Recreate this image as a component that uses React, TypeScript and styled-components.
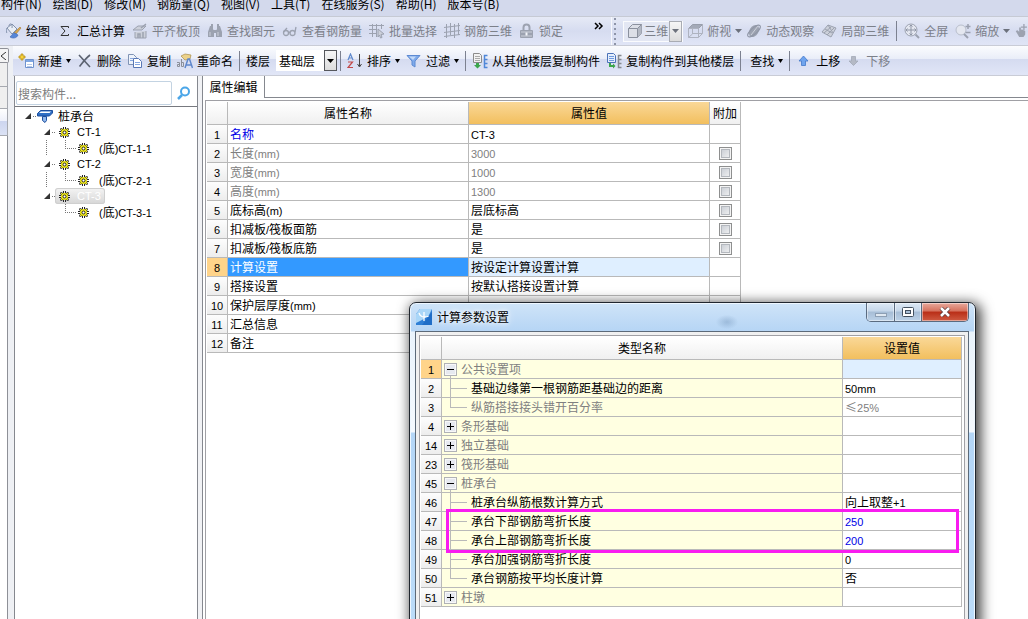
import React from "react";
import styled, { createGlobalStyle, css } from "styled-components";

const GlobalStyle = createGlobalStyle`
  * { box-sizing: border-box; }
  body {
    margin: 0;
    background: #fff;
    color: #000;
    font: 12px/16px "Noto Sans CJK SC", "Liberation Sans", sans-serif;
  }
  button, input, select { font: inherit; color: inherit; }
`;

const LINE = "#b9b9b9";
const FRAME = "#a0a0a5";

/* ---------- page shell ---------- */

const Page = styled.div`
  position: relative;
  display: flex;
  flex-direction: column;
  height: 100vh;
  overflow: hidden;
  background: #fff;
`;

const MenuBar = styled.nav`
  display: flex;
  flex: none;
  height: 17px;
  gap: 11px;
  padding-left: 1px;
  background: #d3d9ec;
  border-bottom: 1px solid #c6cad4;
`;

const MenuItem = styled.button`
  height: 16px;
  margin-top: -4px;
  padding: 0;
  border: 0;
  background: none;
  white-space: nowrap;
  line-height: 16px;
`;

const Toolbar = styled.div`
  display: flex;
  flex: none;
  align-items: center;
  height: 29px;
  padding-left: 6px;
  gap: 7px;
  overflow: hidden;
  border-bottom: 1px solid #c9ccd6;
  background: linear-gradient(#e6eaf6, #d6dcf0 50%, #e0e5f6);
`;

const ItemToolbar = styled(Toolbar)`
  height: 30px;
  padding-left: 5px;
  gap: 6px;
  background: linear-gradient(#fbfcfe, #e9edf8 45%, #d5dbf0 46%, #e1e6f7);
`;

const ToolButton = styled.button<{ $tight?: boolean; $bare?: boolean }>`
  display: flex;
  flex: none;
  align-items: center;
  gap: 4px;
  margin: 0 ${(p) => (p.$tight ? -3 : 0)}px 0 0;
  padding: 0 0 0 ${(p) => (p.$bare ? 3 : 0)}px;
  border: 0;
  background: none;
  white-space: nowrap;
  &:disabled { color: #7c8089; }
`;

const Divider = styled.span`
  flex: none;
  width: 1px;
  height: 20px;
  background: #7c8190;
`;

const Spacer = styled.span`
  flex: none;
  width: 16px;
`;

const Overflow = styled.button`
  flex: none;
  width: 11px;
  height: 24px;
  padding: 0;
  border: 0;
  background: none;
  line-height: 0;
`;

const Grip = styled.span`
  flex: none;
  width: 5px;
  height: 28px;
  border-left: 1px solid #f7f8fc;
  background: radial-gradient(circle at 3px 3px, #8d94a8 1px, transparent 1px) 0 4px / 5px 5px;
`;

const Combo = styled.label<{ $width: number; $dim?: boolean }>`
  display: flex;
  flex: none;
  align-items: center;
  width: ${(p) => p.$width}px;
  height: 21px;
  margin-right: -3px;
  padding-left: 3px;
  gap: 1px;
  background: ${(p) => (p.$dim ? "#e3e7f3" : "#fff")};
  border: ${(p) => (p.$dim ? "1px solid #fafbfd" : "0")};
  color: ${(p) => (p.$dim ? "#7c8089" : "#000")};
`;

const ComboSelect = styled.select`
  flex: 1;
  min-width: 0;
  padding: 0;
  border: 0;
  appearance: none;
  background: none;
  opacity: 1;
`;

const ComboArrow = styled.span<{ $dim?: boolean }>`
  display: flex;
  flex: none;
  align-items: center;
  justify-content: center;
  width: 13px;
  height: 21px;
  border: 1px solid ${(p) => (p.$dim ? "#a9acb3" : "#55575c")};
  background: linear-gradient(#f6f6f6, #dcdcdc);
`;

const Work = styled.div`
  display: flex;
  flex: 1;
  min-height: 0;
`;

const Dock = styled.aside`
  display: flex;
  flex: none;
  flex-direction: column;
  width: 13px;
  padding: 2px 5px 0 0;
  background: #eef0f4;
`;

const DockClose = styled.button`
  height: 15px;
  margin-right: -1px;
  padding: 0;
  border: 1px solid #8e9097;
  border-left: 0;
  border-radius: 0 2px 2px 0;
  background: #f4f4f4;
  line-height: 0;
`;

const DockCell = styled.div<{ $h: number; $tone?: "blue" }>`
  height: ${(p) => p.$h}px;
  border-right: 1px solid #a6a9b0;
  border-bottom: 1px solid #a6a9b0;
  background: ${(p) => (p.$tone ? "linear-gradient(#fff, #eef1fb 45%, #ccd5ef 46%, #dbe2f5)" : "#efefef")};
`;

const DockBody = styled.div`
  flex: 1;
  border-right: 1px solid #8e9097;
  background: #fff;
`;

const Main = styled.div`
  display: flex;
  flex: 1;
  flex-direction: column;
  min-width: 0;
`;

const Panels = styled.div`
  display: flex;
  flex: 1;
  gap: 4px;
  min-height: 0;
  background: #f1f2f5;
`;

/* ---------- component tree ---------- */

const TreePanel = styled.section`
  display: flex;
  flex: none;
  flex-direction: column;
  width: 184px;
  margin-left: 1px;
  border: 1px solid #85888f;
  border-width: 0 1px;
  background: #fff;
`;

const SearchRow = styled.form`
  display: flex;
  align-items: center;
  height: 31px;
  padding: 5px 1px 1px;
  border-bottom: 1px solid #77797f;
`;

const SearchInput = styled.input`
  flex: 1;
  min-width: 0;
  height: 24px;
  padding: 0 1px;
  border: 1px solid #c3d3e2;
  border-radius: 2px;
  &::placeholder { color: #7d7d7d; opacity: 1; }
`;

const SearchButton = styled.button`
  width: 24px;
  padding: 0;
  border: 0;
  background: none;
  line-height: 0;
`;

const TreeList = styled.ul`
  margin: 0;
  padding: 1px 0;
  list-style: none;
`;

const TreeRow = styled.li`
  display: flex;
  align-items: center;
  height: 16px;
  white-space: nowrap;
  svg { flex: none; display: block; }
`;

const TreeLabel = styled.span<{ $gap: number; $selected?: boolean; $inset?: number }>`
  display: flex;
  align-items: center;
  gap: ${(p) => p.$gap}px;
  height: 16px;
  padding: 0 4px 0 ${(p) => p.$inset ?? 0}px;
  border-radius: 3px;
  ${(p) =>
    p.$selected &&
    css`
      color: #fff;
      background: linear-gradient(#f4f4f4, #d6d6d6);
      box-shadow: inset 0 0 0 1px #cfcfcf;
    `}
`;

/* ---------- grids ---------- */

const Latin = styled.span`
  font: 11px/16px "Liberation Sans", sans-serif;
`;

const EditorPane = styled.section`
  display: flex;
  flex: 1;
  flex-direction: column;
  min-width: 0;
  border-left: 1px solid #85888f;
  background: #fff;
`;

const TabStrip = styled.div`
  display: flex;
  height: 22px;
  &::after {
    content: "";
    flex: 1;
    border-bottom: 1px solid #85888f;
  }
`;

const Tab = styled.button`
  width: 62px;
  padding: 0;
  border: 0;
  border-right: 1px solid #85888f;
  background: #fff;
  text-align: center;
`;

const GridFrame = styled.div`
  flex: 1;
  margin: 2px 0 0 2px;
  padding: 1px;
  border: 1px solid ${FRAME};
  border-width: 1px 0 0 1px;
`;

const Grid = styled.table`
  table-layout: fixed;
  border-collapse: separate;
  border-spacing: 0;
`;

const Head = styled.th<{ $hot?: boolean }>`
  height: 23px;
  padding: 0;
  border: 1px solid ${LINE};
  border-width: 0 1px 1px 0;
  background: ${(p) => (p.$hot ? "linear-gradient(#fad898, #f2bf5e)" : "linear-gradient(#fff, #f0f0f0)")};
  font-weight: 400;
  white-space: nowrap;
`;

const RowHead = styled.th<{ $hot?: boolean }>`
  height: 19px;
  padding: 0;
  border: 1px solid ${LINE};
  border-width: 0 1px 1px 0;
  background: ${(p) => (p.$hot ? "#ffd48a" : "linear-gradient(#fdfdfd, #ededed)")};
  font-weight: 400;
`;

type Tone = "dim" | "blue" | "picked" | undefined;

const Cell = styled.td<{ $tone?: Tone; $bg?: string; $flush?: boolean }>`
  height: 19px;
  padding: 0 0 0 ${(p) => (p.$flush ? 0 : 2)}px;
  border: 1px solid ${LINE};
  border-width: 0 1px 1px 0;
  line-height: 16px;
  white-space: nowrap;
  overflow: hidden;
  background: ${(p) => (p.$tone === "picked" ? "#3399ff" : p.$bg ?? "#fff")};
  color: ${(p) =>
    p.$tone === "dim" ? "#808080" : p.$tone === "blue" ? "#0000e6" : p.$tone === "picked" ? "#fff" : "#000"};
`;

const Check = styled.input`
  display: block;
  width: 13px;
  height: 13px;
  margin: 0 auto;
  appearance: none;
  border: 1px solid #8e8f8f;
  background: linear-gradient(135deg, #c3c8d0, #f6f6f6);
  box-shadow: inset 0 0 0 1px #f4f4f4, inset 0 0 0 2px #b4b8be;
`;

const Branch = styled.div`
  display: flex;
  align-items: center;
  height: 18px;
  svg { flex: none; display: block; }
`;

const Expander = styled.button`
  flex: none;
  width: 13px;
  height: 18px;
  margin: 0 4px 0 2px;
  padding: 0;
  border: 0;
  background: none;
`;

/* ---------- settings window ---------- */

const Window = styled.div`
  position: absolute;
  left: 409px;
  top: 302px;
  bottom: -12px;
  display: flex;
  flex-direction: column;
  width: 567px;
  padding: 0 6px 6px 5px;
  border: 1px solid #20262e;
  border-radius: 7px;
  background: linear-gradient(#cfe4f8 0, #b6d5f5 28px, #e9f3fc 29px, #f4f9fe 129px, #b4d6f7 130px, #bcdcf9);
  box-shadow: inset 0 0 0 1px #eef7ff, 3px 3px 13px 2px rgba(0, 0, 0, 0.75);
`;

const TitleBar = styled.header`
  display: flex;
  flex: none;
  align-items: flex-start;
  height: 28px;
  padding-left: 1px;
  gap: 5px;
  background: radial-gradient(ellipse 14px 9px at 312px 19px, rgba(95, 130, 170, 0.35), transparent 80%);
  svg { flex: none; display: block; }
`;

const Title = styled.h1`
  flex: 1;
  margin: 0;
  padding-top: 6px;
  font-size: 12px;
  font-weight: 400;
  line-height: 16px;
  text-shadow: 0 0 8px #fff, 0 0 4px #fff;
`;

const TitleIcon = styled.span`
  padding-top: 6px;
`;

const WindowButtons = styled.div`
  display: flex;
  height: 19px;
  border: 1px solid #5a6b80;
  border-top: 0;
  border-radius: 0 0 5px 5px;
  overflow: hidden;
`;

const WindowButton = styled.button<{ $kind: "min" | "max" | "close" }>`
  display: flex;
  align-items: center;
  justify-content: center;
  width: ${(p) => ({ min: 28, max: 27, close: 46 })[p.$kind]}px;
  padding: 0;
  border: 0;
  border-right: ${(p) => (p.$kind === "close" ? "0" : "1px solid #5a6b80")};
  background: ${(p) =>
    p.$kind === "close"
      ? "linear-gradient(#e8a99c, #d5705c 45%, #b92e17 50%, #cf5b42)"
      : "linear-gradient(#dde9f5, #c5d6e9 45%, #a6bdd6 50%, #bdd2e8)"};
  box-shadow: inset 0 0 0 1px rgba(255, 255, 255, 0.45);
`;

const Client = styled.div`
  flex: 1;
  min-height: 0;
  padding: 3px;
  border: 1px solid #5c6a79;
  background: #f0f0f0;
`;

const SettingsFrame = styled.div`
  height: 100%;
  padding: 1px;
  border: 1px solid ${FRAME};
  background: #fff;
`;

const Highlight = styled.div`
  position: absolute;
  left: 446px;
  top: 509px;
  width: 513px;
  height: 44px;
  border: 3px solid #f81cf0;
  pointer-events: none;
`;

/* ---------- drawings ---------- */

const Svg = ({ w = 16, h = 16, children }: { w?: number; h?: number; children: React.ReactNode }) => (
  <svg width={w} height={h} viewBox={`0 0 ${w} ${h}`} fill="none" aria-hidden="true">
    {children}
  </svg>
);

const Caret = ({ w = 7, dim = false }: { w?: number; dim?: boolean }) => (
  <Svg w={w} h={4}>
    <path d={`M0 0h${w}L${w / 2} 4z`} fill={dim ? "#6c717c" : "#000"} />
  </Svg>
);

const G = "#9ca2b0";
const GL = "#ccd0da";

const PaintIcon = () => (
  <Svg>
    <path d="M1 5l5-4 5 5-5 5z" fill="#e9eef6" stroke="#8291ab" />
    <path d="M3 3C3 0 7 0 6 5M1 5c-1 2-1 4 0 5" stroke="#8291ab" />
    <path d="M14 4l1 1-5 6-2-1z" fill="#d9a84e" stroke="#a37a35" strokeWidth=".6" />
    <path d="M9 10c-2 0-3 2-5 4 3 2 7 1 8-2z" fill="#5686d8" stroke="#3d66b0" strokeWidth=".6" />
  </Svg>
);
const SigmaIcon = () => (
  <Svg>
    <path d="M11.500 5V3.500H4L8 8l-4 4.500h7.500V11" stroke="#333" />
  </Svg>
);
const SlabIcon = () => (
  <Svg>
    <path d="M1 7l5-4h8l-4 4zM3 9v6h11V8" fill={GL} stroke={G} />
    <path d="M6 15v-4h2v4M11 15V9M9 5l5-4" stroke={G} strokeWidth="1.500" />
  </Svg>
);
const BinocularsIcon = () => (
  <Svg>
    <path d="M3 3h3v3l1 2v6H1V9zM10 3h3l2 6v5H9V8l1-2z" fill={G} />
    <path d="M6 7h4v3H6zM4 1h2v2H4zM10 1h2v2h-2z" fill={G} />
    <path d="M3 9v4M11 9v4" stroke={GL} />
  </Svg>
);
const GlassesIcon = () => (
  <Svg>
    <circle cx="4" cy="10" r="2.500" stroke={G} strokeWidth="1.300" />
    <circle cx="10.500" cy="10" r="2.500" stroke={G} strokeWidth="1.300" />
    <path d="M6.500 10c.5-1 1-1 1.500 0M1.500 9L5 5M13 9l1-5" stroke={G} strokeWidth="1.300" />
  </Svg>
);
const PickIcon = () => (
  <Svg>
    <path d="M0 2.500h15M0 6.500h8M0 10.500h8M3.500 1v13M7.500 1v13M12.500 1v5" stroke={G} />
    <path d="M9 6l6 5-3 .5 1 3-1.500.5-1-3L9 14z" fill={GL} stroke={G} />
  </Svg>
);
const RebarIcon = () => (
  <Svg>
    <path d="M2.500 1v14M6.500 0v12M10.500 1v14M14.500 0v12M0 4.500l16-2M0 9.500l16-2M0 13.500l16-2" stroke={G} />
  </Svg>
);
const LockIcon = () => (
  <Svg>
    <path d="M4.500 7V4.500a3 3 0 016 0V7" stroke={G} strokeWidth="2" />
    <rect x="1" y="7" width="13" height="8" rx="1" fill={G} />
    <path d="M2 9h11M2 13h11" stroke={GL} />
    <path d="M7.500 9.500v3" stroke="#f4f6fa" strokeWidth="2" />
  </Svg>
);
const CubeIcon = () => (
  <Svg>
    <path d="M1.500 5.500l4-4h9v9l-4 4h-9z" fill="#dcdfe7" stroke="#8b919e" />
    <path d="M10.500 5.500l4-4v9l-4 4z" fill="#b3b8c3" />
    <path d="M1.500 5.500h9v9M10.500 5.500l4-4" stroke="#8b919e" />
  </Svg>
);
const TopCubeIcon = () => (
  <Svg>
    <path d="M1.500 5.500l4-4h10l-4 4z" fill="#a4aab8" stroke="#989eab" />
    <path d="M1.500 5.500h10v9h-10zM11.500 14.500l4-4v-9M5.500 5v6l-4 3.500M5.500 10.500h10" stroke="#aeb3c0" />
  </Svg>
);
const OrbitIcon = () => (
  <Svg>
    <ellipse cx="8" cy="8" rx="4.500" ry="6.500" transform="rotate(30 8 8)" fill={G} />
    <ellipse cx="8" cy="8" rx="8" ry="3" transform="rotate(-42 8 8)" stroke="#8f96a6" />
    <path d="M5 12L12 3" stroke={GL} />
  </Svg>
);
const LocalCubeIcon = () => (
  <Svg>
    <path d="M1 9l6-7 8 3-5 9z" fill={GL} stroke={G} />
    <path d="M4 6l7 4M7 2l5 8M3 10l7-6M6 12l7-7" stroke={G} />
  </Svg>
);
const FullScreenIcon = () => (
  <Svg>
    <circle cx="7" cy="7" r="6" fill="#e4e7f0" stroke={G} />
    <path
      d="M7 2v10M2 7h10M5.500 3.500L7 2l1.500 1.500M5.500 10.500L7 12l1.500-1.500M3.500 5.500L2 7l1.500 1.500M10.500 5.500L12 7l-1.500 1.500"
      stroke="#8f96a6"
    />
    <path d="M11.500 11.500L15 15" stroke={G} strokeWidth="2" />
  </Svg>
);
const ZoomIcon = () => (
  <Svg>
    <circle cx="6" cy="7" r="5" fill="#e4e7f0" stroke="#b9bfcc" />
    <path d="M9 11l4 4" stroke={G} strokeWidth="2" />
    <path d="M13 1v5M10.500 3.500h5M10.500 9.500h5" stroke="#9aa0af" strokeWidth="1.500" />
  </Svg>
);
const PanIcon = () => (
  <Svg>
    <path d="M2 8l2-1 2 2V4h2v3l1-1 2 1 2 1v4l-2 3H6z" fill={G} />
    <path d="M11.500 0v7M8 3.500h7" stroke={G} strokeWidth="1.500" />
  </Svg>
);

const NewIcon = () => (
  <Svg>
    <path d="M7.500 6.500h8v8h-8z" fill="#fff" stroke="#6f93cf" />
    <path d="M8 7h7v2H8z" fill="#7fa6e2" />
    <path d="M9 11.500h5M9 13.500h5" stroke="#b5c8e8" />
    <path d="M3 1h2v2h2v2H5v2H3V5H1V3h2z" fill="#f7d33c" stroke="#b58d18" strokeWidth=".8" />
  </Svg>
);
const DeleteIcon = () => (
  <Svg>
    <path d="M2 2l11 12M13 2C9 5 6 9 2.500 13.500" stroke="#5b6270" strokeWidth="1.600" />
  </Svg>
);
const CopyIcon = () => (
  <Svg>
    <path d="M1.500 1.500h5l3 3v7h-8z" fill="#eef3fb" stroke="#7f93b5" />
    <path d="M6.500 5.500h5l3 3v6h-8z" fill="#fff" stroke="#5877b5" />
    <path d="M8 9.500h5M8 11.500h5M3 5.500h3M3 7.500h3" stroke="#86a7e0" />
  </Svg>
);
const RenameIcon = () => (
  <Svg>
    <path d="M4 3l4-2 6 1-1 4-5 1z" fill="#ecd28a" stroke="#a98c4a" strokeWidth=".7" />
    <path d="M8 15l3-9h1.500l3 9M9 12h5" stroke="#5f87cc" strokeWidth="1.500" />
    <path d="M0 9.500h2.500v4H.500v-2h2M4.500 6v7.500h2v-4h-2" stroke="#8b8f99" />
  </Svg>
);
const SortIcon = () => (
  <Svg>
    <path d="M1 7l2.500-6L6 7M2 5h3" stroke="#5e88cc" strokeWidth="1.200" />
    <path d="M1 9h4.500L1 14.500h5" stroke="#c24a4a" strokeWidth="1.200" />
    <path d="M12.500 1v12M10.500 11l2 3 2-3" stroke="#444" />
  </Svg>
);
const FilterIcon = () => (
  <Svg>
    <path d="M1 2.500h13L9 8v6l-3-2V8z" fill="#7faaeb" stroke="#5d8ad2" />
    <path d="M3 3.500h7L7 7z" fill="#c4daf8" />
  </Svg>
);
const CopyFromIcon = () => (
  <Svg>
    <path d="M1.500 .5h6l2 2v7h-8z" fill="#f2f2f2" stroke="#8b8b8b" />
    <path d="M3 3.500h5M3 5.500h5M3 7.500h5" stroke="#aaa" />
    <path d="M4 10h3v2h2l-3.500 3.500L2 12h2z" fill="#3ba54c" />
    <path d="M15.500 2.500h-3v12h3M12 6.500h3.500M12 10.500h3.500" stroke="#4f87d8" strokeWidth="1.500" />
  </Svg>
);
const CopyToIcon = () => (
  <Svg>
    <path d="M1.500 .5h6l2 2v7h-8z" fill="#e6effc" stroke="#4b72b8" />
    <path d="M3 3.500h5M3 5.500h5M3 7.500h5" stroke="#6f9ae0" />
    <path d="M3 10h2v2h2v-1.500L9.500 13 7 15.500V14H3z" fill="#3ba54c" />
    <path d="M15.500 2.500h-3v12h3M12 6.500h3.500M12 10.500h3.500" stroke="#85898f" strokeWidth="1.500" />
  </Svg>
);
const UpIcon = () => (
  <Svg>
    <path d="M7.500 3L12 8H9.500v4.500h-4V8H3z" fill="#6fa4ee" stroke="#4379ca" strokeWidth=".8" />
  </Svg>
);
const DownIcon = () => (
  <Svg>
    <path d="M7.500 12.500L3 8h2.500V3.500h4V8H12z" fill="#b4b9c5" stroke="#a2a8b6" strokeWidth=".8" />
  </Svg>
);

const GearIcon = () => (
  <Svg w={11} h={11}>
    <path
      d="M4 0h1v2h1V0h1v2l2-1 1 1-1 2h2v1H9v1h2v1H9l1 2-1 1-2-1v2H6V9H5v2H4V9l-2 1-1-1 1-2H0V6h2V5H0V4h2L1 2l1-1 2 1z"
      fill="#222"
    />
    <circle cx="5.500" cy="5.500" r="3.500" fill="#f4ec1c" />
    <path d="M2 2l7 7M9 2L2 9" stroke="#f4ec1c" />
    <circle cx="5.500" cy="5.500" r="1.500" fill="#fff" stroke="#222" />
  </Svg>
);
const CapIcon = () => (
  <Svg>
    <path d="M.5 5.500l3-3h12v2.500l-3 3H.5z" fill="#2f6fc4" stroke="#1d4f9e" />
    <path d="M2 5l2-1.500h10L12.500 5z" fill="#fff" />
    <path d="M5.500 8.500h4v4l-1.500 2-2.500-2z" fill="#8fb6ea" stroke="#1d4f9e" />
  </Svg>
);

const dots = { stroke: "#777", strokeDasharray: "1 1" };
const Triangle = ({ x }: { x: number }) => <path d={`M${x + 6} 5v6h-6z`} fill="#333" />;

const RootGuide = () => (
  <Svg w={22}>
    <Triangle x={10} />
    <path d="M18 8.500h4" {...dots} />
  </Svg>
);
const NodeGuide = () => (
  <Svg w={40}>
    <Triangle x={29} />
    <path d="M37 8.500h3" {...dots} />
  </Svg>
);
const LeafGuide = ({ more }: { more: boolean }) => (
  <Svg w={63}>
    {more && <path d="M31.500 0v16" {...dots} />}
    <path d="M50.500 0v8M50 8.500h12" {...dots} />
  </Svg>
);

const AppIcon = () => (
  <Svg>
    <path d="M4 0h12v16H0V5z" fill="#2f7fd6" />
    <path d="M4 0h12l-3 6-7 5-6 3V5z" fill="#a9d6f8" />
    <path d="M3 4c1 4 5 5 10 3M8 3v9" stroke="#fff" strokeWidth="1.300" />
    <path d="M16 3v13H6z" fill="#1660bd" opacity=".6" />
  </Svg>
);

const PlusMinus = ({ open }: { open: boolean }) => (
  <Svg w={13} h={18}>
    <rect x=".5" y="3.500" width="12" height="12" fill="#e6e9f0" stroke="#b0b2b6" />
    <rect x="1.500" y="4.500" width="10" height="10" stroke="#f8f8f8" />
    <path d={open ? "M3 9.500h7" : "M3 9.500h7M6.500 6v7"} stroke="#000" />
    {open && <path d="M6.500 16v2" stroke={LINE} />}
  </Svg>
);

const ChildLine = ({ last }: { last: boolean }) => (
  <Svg w={29} h={18}>
    <path d={last ? "M8.500 0v10M8 9.500h17" : "M8.500 0v18M8 9.500h17"} stroke={LINE} />
  </Svg>
);

/* ---------- data ---------- */

const menus = ["构件(N)", "绘图(D)", "修改(M)", "钢筋量(Q)", "视图(V)", "工具(T)", "在线服务(S)", "帮助(H)", "版本号(B)"];

type PropRow = { name: string; value: string; tone?: Tone; valueTone?: Tone; check?: boolean };
const properties: PropRow[] = [
  { name: "名称", value: "CT-3", tone: "blue" },
  { name: "长度(mm)", value: "3000", tone: "dim", valueTone: "dim", check: true },
  { name: "宽度(mm)", value: "1000", tone: "dim", valueTone: "dim", check: true },
  { name: "高度(mm)", value: "1300", tone: "dim", valueTone: "dim", check: true },
  { name: "底标高(m)", value: "层底标高", check: true },
  { name: "扣减板/筏板面筋", value: "是", check: true },
  { name: "扣减板/筏板底筋", value: "是", check: true },
  { name: "计算设置", value: "按设定计算设置计算", tone: "picked" },
  { name: "搭接设置", value: "按默认搭接设置计算" },
  { name: "保护层厚度(mm)", value: "(40)" },
  { name: "汇总信息", value: "" },
  { name: "备注", value: "" },
];

type Setting = { no: number; name: string; kind: "open" | "closed" | "child" | "last"; value?: string; dim?: boolean; blue?: boolean };
const settings: Setting[] = [
  { no: 1, name: "公共设置项", kind: "open" },
  { no: 2, name: "基础边缘第一根钢筋距基础边的距离", kind: "child", value: "50mm" },
  { no: 3, name: "纵筋搭接接头错开百分率", kind: "last", value: "≤25%", dim: true },
  { no: 4, name: "条形基础", kind: "closed" },
  { no: 14, name: "独立基础", kind: "closed" },
  { no: 23, name: "筏形基础", kind: "closed" },
  { no: 45, name: "桩承台", kind: "open" },
  { no: 46, name: "桩承台纵筋根数计算方式", kind: "child", value: "向上取整+1" },
  { no: 47, name: "承台下部钢筋弯折长度", kind: "child", value: "250", blue: true },
  { no: 48, name: "承台上部钢筋弯折长度", kind: "child", value: "200", blue: true },
  { no: 49, name: "承台加强钢筋弯折长度", kind: "child", value: "0" },
  { no: 50, name: "承台钢筋按平均长度计算", kind: "last", value: "否" },
  { no: 51, name: "柱墩", kind: "closed" },
];

/* Sets the Latin runs of a label in the narrow face, the Chinese runs in the page face. */
const Mixed = ({ text }: { text: string }) => (
  <>
    {text
      .split(/([\x20-\x7e]+)/)
      .filter(Boolean)
      .map((run, i) => (/^[\x20-\x7e]/.test(run) ? <Latin key={i}>{run}</Latin> : run))}
  </>
);

type ToolProps = { icon?: React.ReactNode; label: string; caret?: number; dim?: boolean; tight?: boolean };
const Tool = ({ icon, label, caret, dim, tight }: ToolProps) => (
  <ToolButton type="button" disabled={dim} $tight={tight} $bare={!icon}>
    {icon}
    {label}
    {caret && <Caret w={caret} dim={dim} />}
  </ToolButton>
);

/* ---------- sections ---------- */

const ViewToolbar = () => (
  <Toolbar>
    <Tool icon={<PaintIcon />} label="绘图" />
    <Tool icon={<SigmaIcon />} label="汇总计算" />
    <Tool icon={<SlabIcon />} label="平齐板顶" dim />
    <Tool icon={<BinocularsIcon />} label="查找图元" dim />
    <Tool icon={<GlassesIcon />} label="查看钢筋量" dim />
    <Tool icon={<PickIcon />} label="批量选择" dim />
    <Tool icon={<RebarIcon />} label="钢筋三维" dim />
    <Tool icon={<LockIcon />} label="锁定" dim />
    <Spacer />
    <Overflow type="button" aria-label="更多">
      <Svg w={11} h={20}>
        <path d="M2 2l3 3-3 3M6 2l3 3-3 3" stroke="#000" strokeWidth="1.500" />
      </Svg>
    </Overflow>
    <Grip />
    <Combo $width={60} $dim>
      <CubeIcon />
      <ComboSelect aria-label="视图模式" disabled>
        <option>三维</option>
      </ComboSelect>
      <ComboArrow $dim>
        <Caret dim />
      </ComboArrow>
    </Combo>
    <Tool icon={<TopCubeIcon />} label="俯视" caret={7} dim tight />
    <Tool icon={<OrbitIcon />} label="动态观察" dim />
    <Tool icon={<LocalCubeIcon />} label="局部三维" dim />
    <Divider />
    <Tool icon={<FullScreenIcon />} label="全屏" dim />
    <Tool icon={<ZoomIcon />} label="缩放" caret={7} dim tight />
    <PanIcon />
  </Toolbar>
);

const ComponentToolbar = () => (
  <ItemToolbar>
    <Tool icon={<NewIcon />} label="新建" caret={5} />
    <Tool icon={<DeleteIcon />} label="删除" />
    <Tool icon={<CopyIcon />} label="复制" />
    <Tool icon={<RenameIcon />} label="重命名" />
    <Divider />
    <ToolButton as="label" htmlFor="floor">
      楼层
    </ToolButton>
    <Combo $width={61}>
      <ComboSelect id="floor">
        <option>基础层</option>
      </ComboSelect>
      <ComboArrow>
        <Caret />
      </ComboArrow>
    </Combo>
    <Divider />
    <Tool icon={<SortIcon />} label="排序" caret={5} />
    <Tool icon={<FilterIcon />} label="过滤" caret={5} />
    <Divider />
    <Tool icon={<CopyFromIcon />} label="从其他楼层复制构件" />
    <Tool icon={<CopyToIcon />} label="复制构件到其他楼层" />
    <Divider />
    <Tool label="查找" caret={5} />
    <Divider />
    <Tool icon={<UpIcon />} label="上移" />
    <Tool icon={<DownIcon />} label="下移" dim />
  </ItemToolbar>
);

const ComponentTree = () => (
  <TreePanel>
    <SearchRow>
      <SearchInput type="text" placeholder="搜索构件..." aria-label="搜索构件" />
      <SearchButton type="button" aria-label="搜索">
        <Svg w={14} h={14}>
          <circle cx="8" cy="5.500" r="4" stroke="#4ba6e8" strokeWidth="2" />
          <path d="M5 9l-4 4" stroke="#4ba6e8" strokeWidth="2.500" />
        </Svg>
      </SearchButton>
    </SearchRow>
    <TreeList>
      <TreeRow>
        <RootGuide />
        <TreeLabel $gap={5}>
          <CapIcon />
          桩承台
        </TreeLabel>
      </TreeRow>
      {[1, 2, 3].map((n) => (
        <React.Fragment key={n}>
          <TreeRow>
            <NodeGuide />
            <TreeLabel $gap={7} $inset={4} $selected={n === 3}>
              <GearIcon />
              <Latin>{`CT-${n}`}</Latin>
            </TreeLabel>
          </TreeRow>
          <TreeRow>
            <LeafGuide more={n < 3} />
            <TreeLabel $gap={10}>
              <GearIcon />
              <span>
                <Mixed text={`(底)CT-${n}-1`} />
              </span>
            </TreeLabel>
          </TreeRow>
        </React.Fragment>
      ))}
    </TreeList>
  </TreePanel>
);

const PropertyEditor = () => (
  <EditorPane>
    <TabStrip>
      <Tab type="button">属性编辑</Tab>
    </TabStrip>
    <GridFrame>
      <Grid style={{ width: 534 }}>
        <colgroup>
          <col width={21} />
          <col width={241} />
          <col width={241} />
          <col width={31} />
        </colgroup>
        <thead>
          <tr>
            <Head />
            <Head scope="col">属性名称</Head>
            <Head scope="col" $hot>
              属性值
            </Head>
            <Head scope="col">附加</Head>
          </tr>
        </thead>
        <tbody>
          {properties.map((row, i) => (
            <tr key={row.name}>
              <RowHead scope="row" $hot={row.tone === "picked"}>
                <Latin>{i + 1}</Latin>
              </RowHead>
              <Cell $tone={row.tone}>
                <Mixed text={row.name} />
              </Cell>
              <Cell $tone={row.valueTone} $bg={row.tone === "picked" ? "#dfefff" : undefined}>
                <Mixed text={row.value} />
              </Cell>
              <Cell $flush>{row.check && <Check type="checkbox" aria-label={`附加 ${row.name}`} />}</Cell>
            </tr>
          ))}
        </tbody>
      </Grid>
    </GridFrame>
  </EditorPane>
);

const SettingsWindow = () => (
  <Window role="dialog" aria-labelledby="settings-title">
    <TitleBar>
      <TitleIcon>
        <AppIcon />
      </TitleIcon>
      <Title id="settings-title">计算参数设置</Title>
      <WindowButtons>
        <WindowButton type="button" $kind="min" aria-label="最小化">
          <Svg w={12} h={12}>
            <rect x=".5" y="7.500" width="11" height="3" fill="#dfe8f1" stroke="#8d9fb4" />
          </Svg>
        </WindowButton>
        <WindowButton type="button" $kind="max" aria-label="最大化">
          <Svg w={12} h={10}>
            <rect x=".5" y=".5" width="11" height="9" rx="1" fill="#fff" stroke="#43505f" />
            <rect x="3.500" y="3.500" width="5" height="3" fill="#a9bfd6" stroke="#43505f" />
          </Svg>
        </WindowButton>
        <WindowButton type="button" $kind="close" aria-label="关闭">
          <Svg w={12} h={10}>
            <path d="M2 1l8 8M10 1L2 9" stroke="#5a3a3a" strokeWidth="4" />
            <path d="M2 1l8 8M10 1L2 9" stroke="#fff" strokeWidth="2.500" />
          </Svg>
        </WindowButton>
      </WindowButtons>
    </TitleBar>
    <Client>
      <SettingsFrame>
        <Grid style={{ width: 541 }}>
          <colgroup>
            <col width={21} />
            <col width={401} />
            <col width={119} />
          </colgroup>
          <thead>
            <tr>
              <Head />
              <Head scope="col">类型名称</Head>
              <Head scope="col" $hot>
                设置值
              </Head>
            </tr>
          </thead>
          <tbody>
            {settings.map((s) => {
              const group = s.kind === "open" || s.kind === "closed";
              return (
                <tr key={s.no}>
                  <RowHead scope="row" $hot={s.no === 1}>
                    <Latin>{s.no}</Latin>
                  </RowHead>
                  <Cell $flush $bg="#ffffe1" $tone={group || s.dim ? "dim" : undefined}>
                    <Branch>
                      {group ? (
                        <Expander type="button" aria-label={s.kind === "open" ? "折叠" : "展开"}>
                          <PlusMinus open={s.kind === "open"} />
                        </Expander>
                      ) : (
                        <ChildLine last={s.kind === "last"} />
                      )}
                      {s.name}
                    </Branch>
                  </Cell>
                  <Cell $tone={s.dim ? "dim" : s.blue ? "blue" : undefined} $bg={s.no === 1 ? "#dfefff" : undefined}>
                    <Mixed text={s.value ?? ""} />
                  </Cell>
                </tr>
              );
            })}
          </tbody>
        </Grid>
      </SettingsFrame>
    </Client>
  </Window>
);

export default function App() {
  return (
    <Page>
      <GlobalStyle />
      <MenuBar>
        {menus.map((m) => (
          <MenuItem key={m} type="button">
            {m}
          </MenuItem>
        ))}
      </MenuBar>
      <ViewToolbar />
      <Work>
        <Dock>
          <DockClose type="button" aria-label="关闭面板">
            <Svg w={6} h={8}>
              <path d="M0 4L5 0M0 4l5 4" stroke="#333" />
            </Svg>
          </DockClose>
          <DockCell $h={24} />
          <DockCell $h={22} />
          <DockCell $h={27} $tone="blue" />
          <DockBody />
        </Dock>
        <Main>
          <ComponentToolbar />
          <Panels>
            <ComponentTree />
            <PropertyEditor />
          </Panels>
        </Main>
      </Work>
      <SettingsWindow />
      <Highlight />
    </Page>
  );
}
